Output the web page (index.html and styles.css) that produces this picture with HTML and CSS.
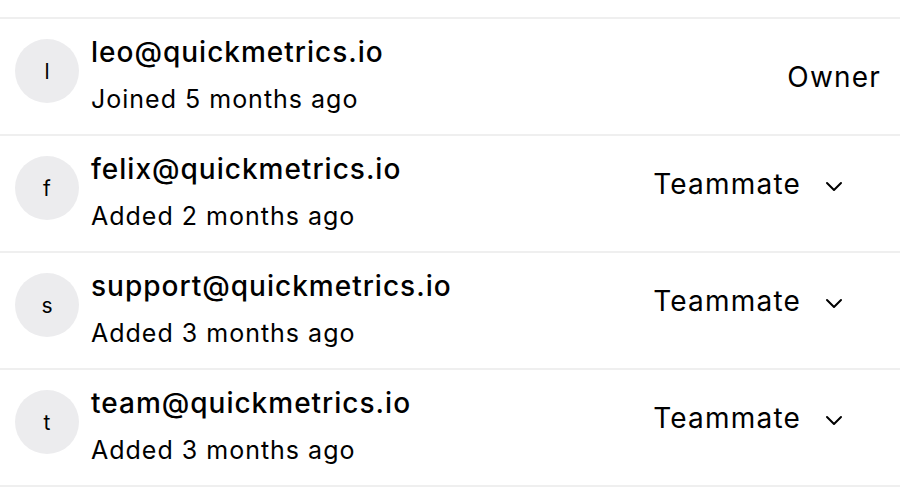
FILE: index.html
```html
<!DOCTYPE html>
<html lang="en">
<head>
	<meta charset="UTF-8">
	<title>Members</title>
	<link rel="stylesheet" href="styles.css">
</head>
<body>

<div id="members">
	<div class="member">
		<div class="avatar">l</div>
		<div class="info">
			<div class="email">leo@quickmetrics.io</div>
			<div class="since">Joined 5 months ago</div>
		</div>
		<div class="role owner">Owner</div>
	</div>
	<div class="member">
		<div class="avatar">f</div>
		<div class="info">
			<div class="email">felix@quickmetrics.io</div>
			<div class="since">Added 2 months ago</div>
		</div>
		<div class="role picker">
			<span>Teammate</span>
			<svg class="chevron" width="18" height="11" viewBox="0 0 18 11"><path d="M2 2l7 7 7-7" fill="none" stroke="#000" stroke-width="2" stroke-linecap="round" stroke-linejoin="round"/></svg>
		</div>
	</div>
	<div class="member">
		<div class="avatar">s</div>
		<div class="info">
			<div class="email">support@quickmetrics.io</div>
			<div class="since">Added 3 months ago</div>
		</div>
		<div class="role picker">
			<span>Teammate</span>
			<svg class="chevron" width="18" height="11" viewBox="0 0 18 11"><path d="M2 2l7 7 7-7" fill="none" stroke="#000" stroke-width="2" stroke-linecap="round" stroke-linejoin="round"/></svg>
		</div>
	</div>
	<div class="member">
		<div class="avatar">t</div>
		<div class="info">
			<div class="email">team@quickmetrics.io</div>
			<div class="since">Added 3 months ago</div>
		</div>
		<div class="role picker">
			<span>Teammate</span>
			<svg class="chevron" width="18" height="11" viewBox="0 0 18 11"><path d="M2 2l7 7 7-7" fill="none" stroke="#000" stroke-width="2" stroke-linecap="round" stroke-linejoin="round"/></svg>
		</div>
	</div>
</div>

</body>
</html>
```

FILE: styles.css
```css
html, body {
	margin: 0;
	padding: 0;
	background-color: #fff;
	font-family: Inter, "Noto Sans", sans-serif;
	color: #000;
}

#members {
	padding-top: 17px;
}

.member {
	display: flex;
	height: 115px;
	padding: 0 20px 0 15px;
	border-top: 2px solid #efefef;
}

.member:last-child {
	border-bottom: 2px solid #efefef;
}

.avatar {
	width: 64px;
	height: 64px;
	margin-top: 20px;
	border-radius: 50%;
	background-color: #ececee;
	display: flex;
	justify-content: center;
	align-items: center;
	font-size: 21px;
	flex-shrink: 0;
}

.info {
	margin-top: 15px;
	margin-left: 12px;
	flex: 1;
}

.email {
	font-size: 28px;
	line-height: 36px;
	font-weight: 500;
	letter-spacing: 1px;
}

.since {
	font-size: 25px;
	line-height: 32px;
	margin-top: 13px;
	letter-spacing: 1px;
}

.role {
	font-size: 28px;
	letter-spacing: 1.2px;
}

.owner {
	margin-top: 41px;
	margin-right: -1px;
}

.picker {
	margin-top: 30px;
	margin-right: 37px;
	display: flex;
	align-items: center;
	height: 36px;
}

.chevron {
	margin-left: 24px;
	margin-top: 4px;
}
```
